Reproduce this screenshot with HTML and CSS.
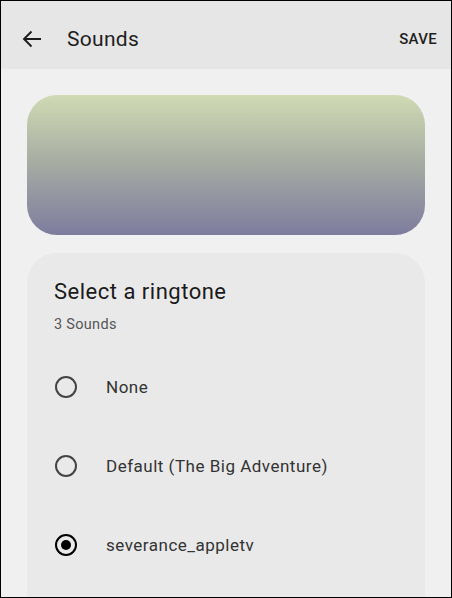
FILE: index.html
```html
<!DOCTYPE html>
<html lang="en">
<head>
  <meta charset="UTF-8" />
  <title>Sounds</title>
  <meta name="viewport" content="width=device-width, initial-scale=1.0" />
  <link rel="stylesheet" href="styles.css">
</head>
<body>
  <div class="screen">
    <div class="topbar">
      <div class="back">
        <svg width="20" height="20" viewBox="0 0 20 20"><path d="M19 10H2M9.5 2.5L2 10l7.5 7.5" fill="none" stroke="#1c1c1c" stroke-width="1.9"/></svg>
      </div>
      <div class="title">Sounds</div>
      <div class="save">SAVE</div>
    </div>

    <div class="content">
      <div class="banner"></div>

      <div class="card">
        <h1>Select a ringtone</h1>
        <div class="count">3 Sounds</div>
        <ul class="tones">
          <li><span class="radio"></span>None</li>
          <li><span class="radio"></span>Default (The Big Adventure)</li>
          <li><span class="radio checked"></span>severance_appletv</li>
        </ul>
      </div>
    </div>
  </div>
</body>
</html>
```

FILE: styles.css
```css
body { margin: 0; padding: 0; font-family: Roboto, "Noto Sans", sans-serif; }
.screen { width: 452px; height: 598px; border: 1px solid #000; box-sizing: border-box; background: #f0f0f0; overflow: hidden; }
.topbar { display: flex; align-items: center; height: 68px; background: #e6e6e6; padding: 8px 14px 0 21px; box-sizing: border-box; }
.back { width: 20px; height: 20px; }
.back svg { display: block; }
.title { flex: 1; margin-left: 25px; font-size: 21px; color: #1e1e1e; letter-spacing: 0.3px; }
.save { font-size: 15px; font-weight: 500; color: #1e1e1e; letter-spacing: 0.3px; }
.content { padding: 26px 26px 0 26px; }
.banner { height: 140px; border-radius: 30px; background: linear-gradient(to bottom, #d0dab3, #a9afa3 45%, #7e7c9e); }
.card { margin-top: 18px; background: #e9e9e9; border-radius: 30px; padding: 24px 27px 30px 27px; height: 400px; }
.card h1 { margin: 0; font-size: 22px; font-weight: 400; line-height: 30px; color: #1a1a1a; letter-spacing: 0.5px; }
.count { margin-top: 8px; font-size: 14.5px; line-height: 20px; color: #555; letter-spacing: 0.3px; }
ul.tones { list-style: none; margin: 12px 0 0 0; padding: 0; }
ul.tones li { display: flex; align-items: center; height: 79px; font-size: 17px; color: #333; letter-spacing: 0.5px; }
.radio { width: 22px; height: 22px; border: 2px solid #444; border-radius: 50%; box-sizing: border-box; margin: 0 29px 0 1px; position: relative; }
.radio.checked { border-color: #000; }
.radio.checked::after { content: ""; position: absolute; left: 4px; top: 4px; width: 10px; height: 10px; border-radius: 50%; background: #000; }
```
